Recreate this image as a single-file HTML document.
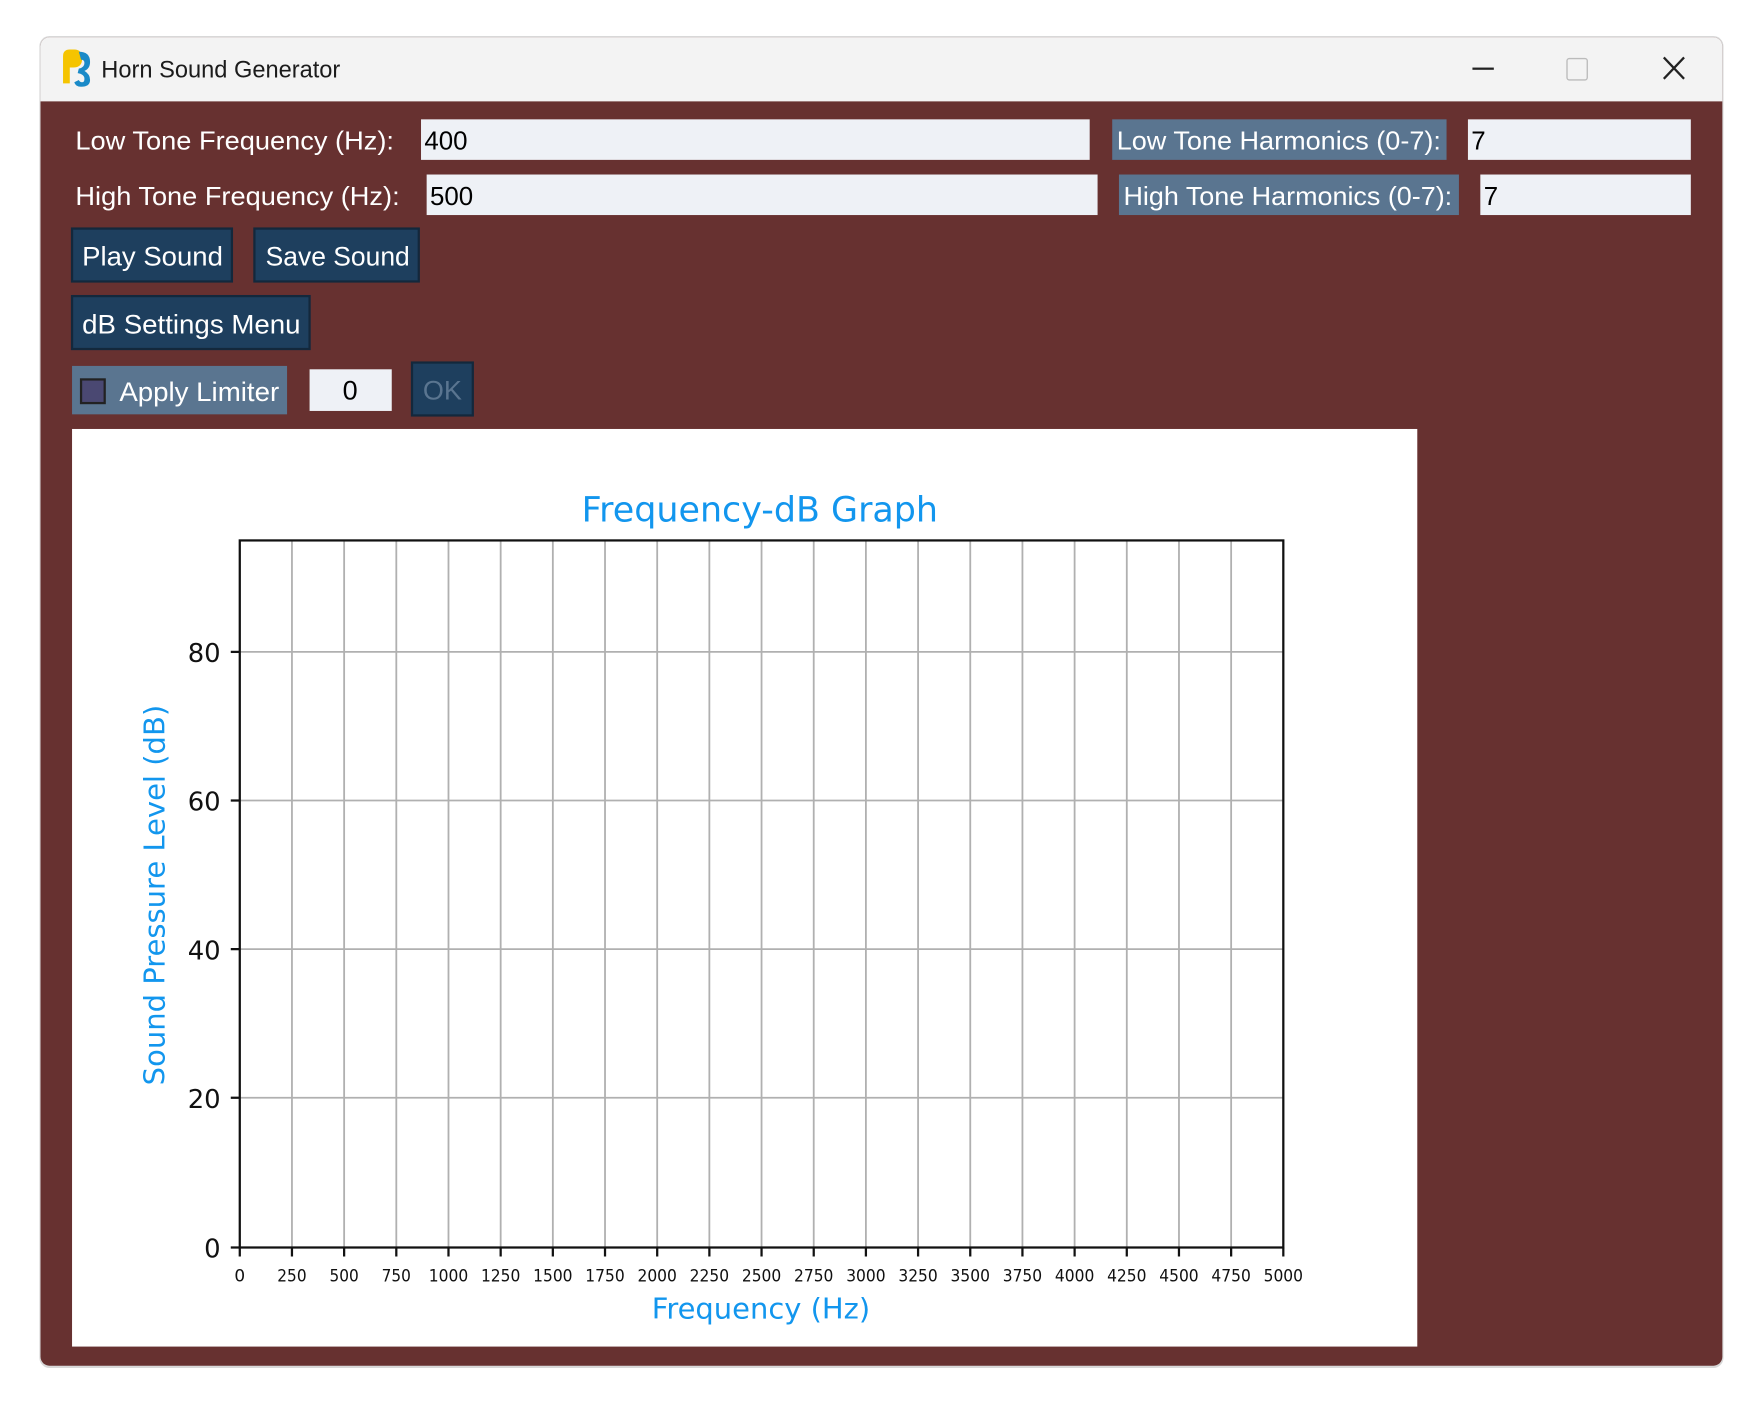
<!DOCTYPE html>
<html><head><meta charset="utf-8"><style>
html,body{margin:0;padding:0;background:#fff;}
svg{display:block;}
</style></head><body>
<svg width="1764" height="1404" viewBox="0 0 1567 1247" preserveAspectRatio="none" xmlns="http://www.w3.org/2000/svg" font-family="Liberation Sans, sans-serif">
<rect x="0" y="0" width="1567" height="1247" fill="#fff"/>
<rect x="35" y="32" width="1496" height="1183" rx="9" fill="#d8d8d8"/>
<rect x="36" y="33" width="1494" height="1180" rx="8" fill="#673130"/>
<path d="M44 33 H1522 a8 8 0 0 1 8 8 V90 H36 V41 a8 8 0 0 1 8 -8 Z" fill="#f3f3f3"/>
<path d="M56 50 q0-6 6-6 h4 q7 0 7 8 q0 8-8 8 h-3 v14 h-6 Z" fill="#f5c400"/>
<path d="M70 46 q10 0 10 9 q0 6-5 8 q5 3 5 8 q0 6-8 6 q-5 0-6-4 l4-2 q1 2 3 2 q2 0 2-3 q0-4-6-5 l1-4 q5-1 5-5 q0-3-3-3 Z" fill="#1a8ac8"/>
<text x="90" y="69" font-size="21" fill="#1b1b1b">Horn Sound Generator</text>
<rect x="1308" y="60" width="19" height="2" fill="#222"/>
<rect x="1392" y="52" width="18" height="19" rx="2" fill="none" stroke="#bbb" stroke-width="1.2"/>
<path d="M1478 51 L1496 70 M1496 51 L1478 70" stroke="#222" stroke-width="2"/>
<text x="67" y="133" font-size="23" fill="#fff" textLength="283" lengthAdjust="spacingAndGlyphs">Low Tone Frequency (Hz):</text>
<rect x="374" y="106" width="594" height="36" fill="#eef1f6"/>
<text x="377" y="133" font-size="23" fill="#000">400</text>
<rect x="988" y="106" width="297" height="36" fill="#5a7590"/>
<text x="992" y="133" font-size="23" fill="#fff" textLength="288" lengthAdjust="spacingAndGlyphs">Low Tone Harmonics (0-7):</text>
<rect x="1304" y="106" width="198" height="36" fill="#eef1f6"/>
<text x="1307" y="133" font-size="23" fill="#000">7</text>
<text x="67" y="182" font-size="23" fill="#fff" textLength="288" lengthAdjust="spacingAndGlyphs">High Tone Frequency (Hz):</text>
<rect x="379" y="155" width="596" height="36" fill="#eef1f6"/>
<text x="382" y="182" font-size="23" fill="#000">500</text>
<rect x="994" y="155" width="302" height="36" fill="#5a7590"/>
<text x="998" y="182" font-size="23" fill="#fff" textLength="292" lengthAdjust="spacingAndGlyphs">High Tone Harmonics (0-7):</text>
<rect x="1315" y="155" width="187" height="36" fill="#eef1f6"/>
<text x="1318" y="182" font-size="23" fill="#000">7</text>
<rect x="64" y="203" width="142" height="47" fill="#1e3f5e" stroke="#13283c" stroke-width="2"/>
<text x="73" y="236" font-size="24" fill="#fff" textLength="125" lengthAdjust="spacingAndGlyphs">Play Sound</text>
<rect x="226" y="203" width="146" height="47" fill="#1e3f5e" stroke="#13283c" stroke-width="2"/>
<text x="236" y="236" font-size="24" fill="#fff" textLength="128" lengthAdjust="spacingAndGlyphs">Save Sound</text>
<rect x="64" y="263" width="211" height="47" fill="#1e3f5e" stroke="#13283c" stroke-width="2"/>
<text x="73" y="296" font-size="24" fill="#fff" textLength="194" lengthAdjust="spacingAndGlyphs">dB Settings Menu</text>
<rect x="64" y="325" width="191" height="43" fill="#5a7590"/>
<rect x="72" y="337" width="21" height="21" fill="#4a4872" stroke="#222" stroke-width="2"/>
<text x="106" y="356" font-size="24" fill="#fff" textLength="142" lengthAdjust="spacingAndGlyphs">Apply Limiter</text>
<rect x="275" y="328" width="73" height="37" fill="#eef1f6"/>
<text x="311" y="355" font-size="24" fill="#000" text-anchor="middle">0</text>
<rect x="366" y="322" width="54" height="47" fill="#1e3f5e" stroke="#13283c" stroke-width="2"/>
<text x="393" y="355" font-size="24" fill="#5a7590" text-anchor="middle">OK</text>
<rect x="64" y="381" width="1195" height="815" fill="#fff"/>
<text x="675" y="463" font-size="31" fill="#1296ee" text-anchor="middle" font-family="DejaVu Sans, sans-serif">Frequency-dB Graph</text>
<g stroke="#b0b0b0" stroke-width="1.6">
<line x1="259.35" y1="480" x2="259.35" y2="1108"/><line x1="305.7" y1="480" x2="305.7" y2="1108"/><line x1="352.05" y1="480" x2="352.05" y2="1108"/><line x1="398.4" y1="480" x2="398.4" y2="1108"/><line x1="444.75" y1="480" x2="444.75" y2="1108"/><line x1="491.1" y1="480" x2="491.1" y2="1108"/><line x1="537.45" y1="480" x2="537.45" y2="1108"/><line x1="583.8" y1="480" x2="583.8" y2="1108"/><line x1="630.15" y1="480" x2="630.15" y2="1108"/><line x1="676.5" y1="480" x2="676.5" y2="1108"/><line x1="722.85" y1="480" x2="722.85" y2="1108"/><line x1="769.2" y1="480" x2="769.2" y2="1108"/><line x1="815.55" y1="480" x2="815.55" y2="1108"/><line x1="861.9" y1="480" x2="861.9" y2="1108"/><line x1="908.25" y1="480" x2="908.25" y2="1108"/><line x1="954.6" y1="480" x2="954.6" y2="1108"/><line x1="1000.95" y1="480" x2="1000.95" y2="1108"/><line x1="1047.3" y1="480" x2="1047.3" y2="1108"/><line x1="1093.65" y1="480" x2="1093.65" y2="1108"/>
<line x1="213" y1="579" x2="1140" y2="579"/><line x1="213" y1="711" x2="1140" y2="711"/><line x1="213" y1="843" x2="1140" y2="843"/><line x1="213" y1="975" x2="1140" y2="975"/>
</g>
<rect x="213" y="480" width="927" height="628" fill="none" stroke="#111" stroke-width="2"/>
<g stroke="#111" stroke-width="2">
<line x1="205" y1="579" x2="213" y2="579"/><line x1="205" y1="711" x2="213" y2="711"/><line x1="205" y1="843" x2="213" y2="843"/><line x1="205" y1="975" x2="213" y2="975"/><line x1="205" y1="1108" x2="213" y2="1108"/>
<line x1="213" y1="1108" x2="213" y2="1116"/><line x1="259.35" y1="1108" x2="259.35" y2="1116"/><line x1="305.7" y1="1108" x2="305.7" y2="1116"/><line x1="352.05" y1="1108" x2="352.05" y2="1116"/><line x1="398.4" y1="1108" x2="398.4" y2="1116"/><line x1="444.75" y1="1108" x2="444.75" y2="1116"/><line x1="491.1" y1="1108" x2="491.1" y2="1116"/><line x1="537.45" y1="1108" x2="537.45" y2="1116"/><line x1="583.8" y1="1108" x2="583.8" y2="1116"/><line x1="630.15" y1="1108" x2="630.15" y2="1116"/><line x1="676.5" y1="1108" x2="676.5" y2="1116"/><line x1="722.85" y1="1108" x2="722.85" y2="1116"/><line x1="769.2" y1="1108" x2="769.2" y2="1116"/><line x1="815.55" y1="1108" x2="815.55" y2="1116"/><line x1="861.9" y1="1108" x2="861.9" y2="1116"/><line x1="908.25" y1="1108" x2="908.25" y2="1116"/><line x1="954.6" y1="1108" x2="954.6" y2="1116"/><line x1="1000.95" y1="1108" x2="1000.95" y2="1116"/><line x1="1047.3" y1="1108" x2="1047.3" y2="1116"/><line x1="1093.65" y1="1108" x2="1093.65" y2="1116"/><line x1="1140" y1="1108" x2="1140" y2="1116"/>
</g>
<g font-size="23" fill="#111" text-anchor="end" font-family="DejaVu Sans, sans-serif">
<text x="196" y="588">80</text><text x="196" y="720">60</text><text x="196" y="852">40</text><text x="196" y="984">20</text><text x="196" y="1117">0</text>
</g>
<g font-size="15" fill="#111" text-anchor="middle" font-family="DejaVu Sans, sans-serif">
<text x="213" y="1138">0</text>
<text x="259.35" y="1138" textLength="26" lengthAdjust="spacingAndGlyphs">250</text><text x="305.7" y="1138" textLength="26" lengthAdjust="spacingAndGlyphs">500</text><text x="352.05" y="1138" textLength="26" lengthAdjust="spacingAndGlyphs">750</text>
<text x="398.4" y="1138" textLength="35" lengthAdjust="spacingAndGlyphs">1000</text><text x="444.75" y="1138" textLength="35" lengthAdjust="spacingAndGlyphs">1250</text><text x="491.1" y="1138" textLength="35" lengthAdjust="spacingAndGlyphs">1500</text><text x="537.45" y="1138" textLength="35" lengthAdjust="spacingAndGlyphs">1750</text><text x="583.8" y="1138" textLength="35" lengthAdjust="spacingAndGlyphs">2000</text><text x="630.15" y="1138" textLength="35" lengthAdjust="spacingAndGlyphs">2250</text><text x="676.5" y="1138" textLength="35" lengthAdjust="spacingAndGlyphs">2500</text><text x="722.85" y="1138" textLength="35" lengthAdjust="spacingAndGlyphs">2750</text><text x="769.2" y="1138" textLength="35" lengthAdjust="spacingAndGlyphs">3000</text><text x="815.55" y="1138" textLength="35" lengthAdjust="spacingAndGlyphs">3250</text><text x="861.9" y="1138" textLength="35" lengthAdjust="spacingAndGlyphs">3500</text><text x="908.25" y="1138" textLength="35" lengthAdjust="spacingAndGlyphs">3750</text><text x="954.6" y="1138" textLength="35" lengthAdjust="spacingAndGlyphs">4000</text><text x="1000.95" y="1138" textLength="35" lengthAdjust="spacingAndGlyphs">4250</text><text x="1047.3" y="1138" textLength="35" lengthAdjust="spacingAndGlyphs">4500</text><text x="1093.65" y="1138" textLength="35" lengthAdjust="spacingAndGlyphs">4750</text><text x="1140" y="1138" textLength="35" lengthAdjust="spacingAndGlyphs">5000</text>
</g>
<text x="676" y="1171" font-size="25" fill="#1296ee" text-anchor="middle" font-family="DejaVu Sans, sans-serif" textLength="194" lengthAdjust="spacingAndGlyphs">Frequency (Hz)</text>
<text transform="translate(146,795) rotate(-90)" font-size="25" fill="#1296ee" text-anchor="middle" font-family="DejaVu Sans, sans-serif" textLength="338" lengthAdjust="spacingAndGlyphs">Sound Pressure Level (dB)</text>
</svg>
</body></html>
